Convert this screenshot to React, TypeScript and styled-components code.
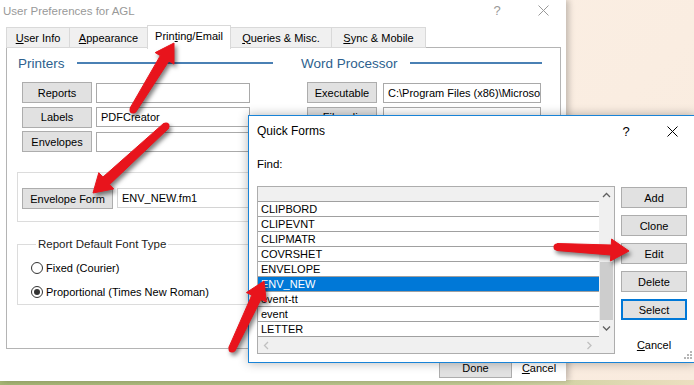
import React from 'react'
import styled, { createGlobalStyle } from 'styled-components'

const GlobalStyle = createGlobalStyle`
  html, body { margin: 0; padding: 0; overflow: hidden; }
  body { font-family: "Liberation Sans", Arial, sans-serif; color: #000; }
  button { font-family: inherit; }
`

const Desktop = styled.div`
  position: relative;
  width: 694px;
  height: 385px;
  overflow: hidden;
  background:
    linear-gradient(to right, #a6b574, #c4cc95 70%, #ecdfc0) bottom / 100% 5px no-repeat,
    linear-gradient(135deg, #fcf1e7, #f9ebde);
`

const MainWindow = styled.div`
  position: absolute;
  left: 0;
  top: 0;
  width: 566px;
  height: 381px;
  background: #fff;
  box-shadow: 3px 0 6px rgba(0, 0, 0, 0.22);
  display: flex;
  flex-direction: column;
`

const TitleBar = styled.div<{ $dialog?: boolean }>`
  display: flex;
  align-items: center;
  flex: none;
  height: ${p => (p.$dialog ? 30 : 21)}px;
  padding-left: ${p => (p.$dialog ? 8 : 3)}px;
  color: ${p => (p.$dialog ? '#000' : '#999')};
  font-size: ${p => (p.$dialog ? 12 : 11.5)}px;
`

const Title = styled.div`
  flex: 1;
`

const CaptionBtn = styled.div<{ $dialog?: boolean }>`
  width: 46px;
  height: 100%;
  display: flex;
  align-items: center;
  justify-content: center;
  color: ${p => (p.$dialog ? '#000' : '#999')};
  font-size: 13px;
`

const TabRow = styled.div`
  display: flex;
  align-items: flex-end;
  height: 27px;
  padding-left: 7px;
  flex: none;
`

const Tab = styled.div<{ $w: number; $active?: boolean }>`
  width: ${p => p.$w}px;
  height: ${p => (p.$active ? 24 : 21)}px;
  margin-left: -1px;
  margin-bottom: ${p => (p.$active ? -1 : 0)}px;
  box-sizing: border-box;
  border: 1px solid #d9d9d9;
  border-bottom: ${p => (p.$active ? 'none' : '1px solid #d9d9d9')};
  background: ${p => (p.$active ? '#fff' : '#f0f0f0')};
  font-size: 11px;
  display: flex;
  align-items: center;
  justify-content: center;
  padding-bottom: ${p => (p.$active ? 3 : 0)}px;
  position: relative;
  z-index: ${p => (p.$active ? 2 : 0)};
`

const Panel = styled.div`
  margin: -1px 5px 0 6px;
  height: 302px;
  box-sizing: border-box;
  border: 1px solid #b4b4b4;
  flex: none;
  display: grid;
  grid-template-columns: 256px 242px;
  column-gap: 27px;
  align-content: start;
  padding: 6px 0 0 10px;
`

const Column = styled.div`
  display: flex;
  flex-direction: column;
`

const Heading = styled.div`
  display: flex;
  align-items: center;
  gap: 12px;
  height: 18px;
  padding-left: 1px;
  font-size: 13.5px;
  color: #2d5f8e;
`

const HeadingLine = styled.div`
  flex: 1;
  height: 2px;
  background: #4a80b4;
`

const FieldList = styled.div<{ $indent: number }>`
  display: flex;
  flex-direction: column;
  gap: 3.5px;
  margin-top: 10px;
  padding-left: ${p => p.$indent}px;
`

const FieldRow = styled.div<{ $gap: number }>`
  display: flex;
  align-items: center;
  gap: ${p => p.$gap}px;
`

const Button = styled.button<{ $w: number; $default?: boolean }>`
  width: ${p => p.$w}px;
  height: 21px;
  flex: none;
  box-sizing: border-box;
  padding: 0;
  background: #e1e1e1;
  border: ${p => (p.$default ? '2px solid #0078d7' : '1px solid #adadad')};
  font-size: 11px;
  color: #000;
`

const FlatButton = styled.button<{ $w: number; $top?: number }>`
  width: ${p => p.$w}px;
  height: 21px;
  margin-top: ${p => p.$top ?? 0}px;
  padding: 0;
  border: none;
  background: transparent;
  font-size: 11px;
  color: #000;
`

const TextBox = styled.div<{ $w: number; $light?: boolean }>`
  width: ${p => p.$w}px;
  height: 20px;
  box-sizing: border-box;
  border: 1px solid ${p => (p.$light ? '#d4d4d4' : '#a9a9a9')};
  padding-left: 4px;
  font-size: 11px;
  line-height: 18px;
  white-space: nowrap;
  overflow: hidden;
`

const GroupBox = styled.div`
  margin-top: 20px;
  height: 50px;
  box-sizing: border-box;
  border: 1px solid #dcdcdc;
  display: flex;
  align-items: flex-start;
  gap: 4px;
  padding: 15px 0 0 4px;
`

const FieldSet = styled.fieldset`
  margin: 15px 0 0;
  border: 1px solid #dcdcdc;
  padding: 9px 0 4px 13px;
  display: flex;
  flex-direction: column;
  gap: 8px;
`

const Legend = styled.legend`
  margin-left: 5px;
  padding: 0 2px;
  font-size: 11.5px;
  line-height: 14px;
  color: #222;
`

const RadioRow = styled.label`
  display: flex;
  align-items: center;
  gap: 3px;
  height: 16px;
  font-size: 11px;
`

const RadioDot = styled.span<{ $on?: boolean }>`
  width: 12px;
  height: 12px;
  box-sizing: border-box;
  border-radius: 50%;
  border: 1px solid #333;
  display: flex;
  align-items: center;
  justify-content: center;
  &::after {
    content: '';
    width: 6px;
    height: 6px;
    border-radius: 50%;
    background: ${p => (p.$on ? '#333' : 'transparent')};
  }
`

const BottomBar = styled.div`
  display: flex;
  justify-content: flex-end;
  gap: 4px;
  margin-top: 8px;
  padding-right: 4px;
`

/* Quick Forms dialog */

const Dialog = styled.div`
  position: absolute;
  left: 248px;
  top: 115px;
  width: 448px;
  height: 248px;
  box-sizing: border-box;
  background: #fff;
  border: 1px solid #1883d7;
  box-shadow: 0 0 10px rgba(0, 0, 0, 0.3);
  display: flex;
  flex-direction: column;
  z-index: 3;
`

const DialogBody = styled.div`
  padding: 0 8px;
  display: flex;
  flex-direction: column;
`

const FindLabel = styled.div`
  margin-top: 11px;
  font-size: 11.5px;
  line-height: 14px;
`

const ListArea = styled.div`
  display: flex;
  gap: 6px;
  margin-top: 15px;
`

const ListBox = styled.div`
  width: 358px;
  height: 168px;
  box-sizing: border-box;
  border: 1px solid #adadad;
  display: flex;
  flex-direction: column;
`

const ListMain = styled.div`
  display: flex;
  height: 150px;
`

const Items = styled.div`
  flex: 1;
  display: flex;
  flex-direction: column;
`

const FindRow = styled.div`
  height: 15px;
  box-sizing: border-box;
  background: #f0f0f0;
  border-bottom: 1px solid #a0a0a0;
`

const Item = styled.div<{ $selected?: boolean }>`
  height: 15px;
  box-sizing: border-box;
  border-bottom: 1px solid #a0a0a0;
  padding-left: 3px;
  font-size: 11px;
  line-height: 14px;
  background: ${p => (p.$selected ? '#0078d7' : '#fff')};
  color: ${p => (p.$selected ? '#fff' : '#000')};
`

const VScroll = styled.div`
  width: 15px;
  background: #f0f0f0;
  display: flex;
  flex-direction: column;
`

const ArrowCell = styled.div<{ $w?: number }>`
  width: ${p => (p.$w ? `${p.$w}px` : '100%')};
  height: 17px;
  display: flex;
  align-items: center;
  justify-content: center;
  flex: none;
`

const Track = styled.div`
  flex: 1;
  display: flex;
  flex-direction: column;
  justify-content: flex-end;
  align-items: center;
`

const Thumb = styled.div`
  width: 13px;
  height: 58px;
  background: #cdcdcd;
`

const HScroll = styled.div`
  height: 16px;
  background: #f0f0f0;
  display: flex;
  justify-content: space-between;
  padding-right: 16px;
`

const ButtonColumn = styled.div`
  display: flex;
  flex-direction: column;
  gap: 7px;
  padding-top: 1px;
`

const Grip = styled.svg`
  position: absolute;
  right: 3px;
  bottom: 3px;
`

const Overlay = styled.svg`
  position: absolute;
  left: 0;
  top: 0;
  z-index: 10;
  pointer-events: none;
  filter: drop-shadow(2px 3px 2px rgba(0, 0, 0, 0.5));
`

const Close = ({ color }: { color: string }) => (
  <svg width="11" height="11" viewBox="0 0 11 11">
    <path d="M0.5 0.5 L10.5 10.5 M10.5 0.5 L0.5 10.5" stroke={color} strokeWidth="1" />
  </svg>
)

const Chevron = ({ dir, color }: { dir: 'up' | 'down' | 'left' | 'right'; color: string }) => {
  const d = {
    up: 'M1 5 L4.5 1.5 L8 5',
    down: 'M1 1.5 L4.5 5 L8 1.5',
    left: 'M5 1 L1.5 4.5 L5 8',
    right: 'M1.5 1 L5 4.5 L1.5 8',
  }[dir]
  const vertical = dir === 'up' || dir === 'down'
  return (
    <svg width={vertical ? 9 : 7} height={vertical ? 7 : 9}>
      <path d={d} stroke={color} strokeWidth="1.3" fill="none" />
    </svg>
  )
}

// tapered red call-out arrow: thin round tail, wider shaft near the head
function Arrow({ from, to }: { from: [number, number]; to: [number, number] }) {
  const dx = to[0] - from[0]
  const dy = to[1] - from[1]
  const len = Math.hypot(dx, dy)
  const ux = dx / len
  const uy = dy / len
  const nx = -uy
  const ny = ux
  const L = 18
  const W = 11
  const tail = 3.5
  const neck = 5
  const bx = to[0] - ux * L
  const by = to[1] - uy * L
  const pt = (x: number, y: number) => `${x.toFixed(1)},${y.toFixed(1)}`
  const shape = [
    pt(from[0] + nx * tail, from[1] + ny * tail),
    pt(bx + nx * neck, by + ny * neck),
    pt(bx + nx * W, by + ny * W),
    pt(to[0], to[1]),
    pt(bx - nx * W, by - ny * W),
    pt(bx - nx * neck, by - ny * neck),
    pt(from[0] - nx * tail, from[1] - ny * tail),
  ].join(' ')
  return (
    <g fill="#e8141c">
      <circle cx={from[0]} cy={from[1]} r={tail} />
      <polygon points={shape} stroke="#e8141c" strokeWidth={1} strokeLinejoin="round" />
    </g>
  )
}

const forms = ['CLIPBORD', 'CLIPEVNT', 'CLIPMATR', 'COVRSHET', 'ENVELOPE', 'ENV_NEW', 'event-tt', 'event', 'LETTER']

export default function App() {
  return (
    <Desktop>
      <GlobalStyle />
      <MainWindow>
        <TitleBar>
          <Title>User Preferences for AGL</Title>
          <CaptionBtn>?</CaptionBtn>
          <CaptionBtn><Close color="#999" /></CaptionBtn>
        </TitleBar>
        <TabRow>
          <Tab $w={64}><span><u>U</u>ser Info</span></Tab>
          <Tab $w={79}><span><u>A</u>ppearance</span></Tab>
          <Tab $w={84} $active><span>Prin<u>t</u>ing/Email</span></Tab>
          <Tab $w={102}><span><u>Q</u>ueries &amp; Misc.</span></Tab>
          <Tab $w={95}><span><u>S</u>ync &amp; Mobile</span></Tab>
        </TabRow>
        <Panel>
          <Column>
            <Heading>Printers<HeadingLine /></Heading>
            <FieldList $indent={5}>
              <FieldRow $gap={4}><Button $w={70}>Reports</Button><TextBox $w={154} /></FieldRow>
              <FieldRow $gap={4}><Button $w={70}>Labels</Button><TextBox $w={154}>PDFCreator</TextBox></FieldRow>
              <FieldRow $gap={4}><Button $w={70}>Envelopes</Button><TextBox $w={154} /></FieldRow>
            </FieldList>
            <GroupBox>
              <Button $w={91}>Envelope Form</Button>
              <TextBox $w={133} $light>ENV_NEW.fm1</TextBox>
            </GroupBox>
            <FieldSet>
              <Legend>Report Default Font Type</Legend>
              <RadioRow><RadioDot />Fixed (Courier)</RadioRow>
              <RadioRow><RadioDot $on />Proportional (Times New Roman)</RadioRow>
            </FieldSet>
          </Column>
          <Column>
            <Heading>Word Processor<HeadingLine /></Heading>
            <FieldList $indent={7}>
              <FieldRow $gap={6}><Button $w={70}>Executable</Button><TextBox $w={158}>C:\Program Files (x86)\Microsof</TextBox></FieldRow>
              <FieldRow $gap={6}><Button $w={70}>Files dir</Button><TextBox $w={158} /></FieldRow>
            </FieldList>
          </Column>
        </Panel>
        <BottomBar>
          <Button $w={73}>Done</Button>
          <FlatButton $w={46}><u>C</u>ancel</FlatButton>
        </BottomBar>
      </MainWindow>

      <Dialog>
        <TitleBar $dialog>
          <Title>Quick Forms</Title>
          <CaptionBtn $dialog>?</CaptionBtn>
          <CaptionBtn $dialog><Close color="#000" /></CaptionBtn>
        </TitleBar>
        <DialogBody>
          <FindLabel>Find:</FindLabel>
          <ListArea>
            <ListBox>
              <ListMain>
                <Items>
                  <FindRow />
                  {forms.map(f => (
                    <Item key={f} $selected={f === 'ENV_NEW'}>{f}</Item>
                  ))}
                </Items>
                <VScroll>
                  <ArrowCell><Chevron dir="up" color="#606060" /></ArrowCell>
                  <Track><Thumb /></Track>
                  <ArrowCell><Chevron dir="down" color="#606060" /></ArrowCell>
                </VScroll>
              </ListMain>
              <HScroll>
                <ArrowCell $w={17}><Chevron dir="left" color="#c0c0c0" /></ArrowCell>
                <ArrowCell $w={17}><Chevron dir="right" color="#c0c0c0" /></ArrowCell>
              </HScroll>
            </ListBox>
            <ButtonColumn>
              <Button $w={66}>Add</Button>
              <Button $w={66}>Clone</Button>
              <Button $w={66}>Edit</Button>
              <Button $w={66}>Delete</Button>
              <Button $w={66} $default>Select</Button>
              <FlatButton $w={66} $top={7}><u>C</u>ancel</FlatButton>
            </ButtonColumn>
          </ListArea>
        </DialogBody>
        <Grip width="8" height="8" viewBox="0 0 8 8">
          <rect x="6" y="0" width="2" height="2" fill="#b5b5b5" />
          <rect x="3" y="3" width="2" height="2" fill="#b5b5b5" />
          <rect x="6" y="3" width="2" height="2" fill="#b5b5b5" />
          <rect x="0" y="6" width="2" height="2" fill="#b5b5b5" />
          <rect x="3" y="6" width="2" height="2" fill="#b5b5b5" />
          <rect x="6" y="6" width="2" height="2" fill="#b5b5b5" />
        </Grip>
      </Dialog>

      <Overlay width="694" height="385">
        <Arrow from={[133, 110]} to={[174, 43]} />
        <Arrow from={[166, 126]} to={[93, 193]} />
        <Arrow from={[557, 247]} to={[629, 251]} />
        <Arrow from={[232, 349]} to={[264, 281]} />
      </Overlay>
    </Desktop>
  )
}
